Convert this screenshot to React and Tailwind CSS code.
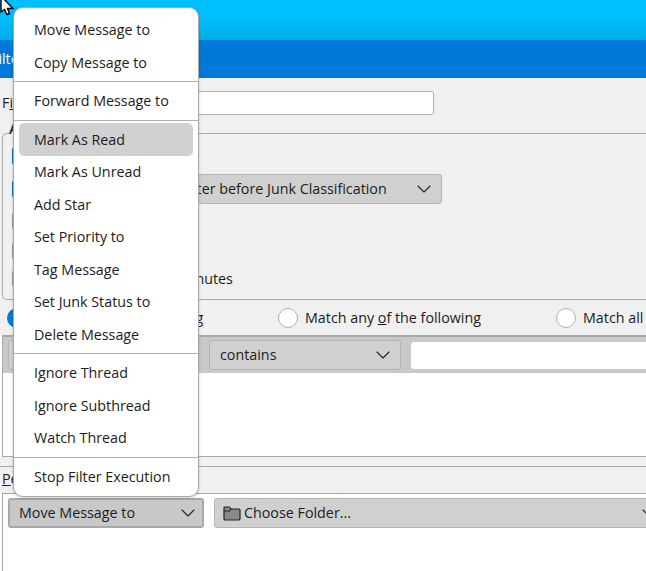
import React from "react";
import { ChevronDown } from "lucide-react";

const menuGroups = [
  ["Move Message to", "Copy Message to"],
  ["Forward Message to"],
  ["Mark As Read", "Mark As Unread", "Add Star", "Set Priority to", "Tag Message", "Set Junk Status to", "Delete Message"],
  ["Ignore Thread", "Ignore Subthread", "Watch Thread"],
  ["Stop Filter Execution"],
];

function Select({ children, className, focused }) {
  const tone = focused ? "border-2 border-[#a8a8a8] bg-[#c8c8c8] pl-[9px] pr-[2px]" : "border border-[#b4b4b4] bg-[#d0d0d0] pl-[10px] pr-[5px]";
  return (
    <div className={"flex shrink-0 items-center justify-between rounded-[3px] " + tone + " " + className}>
      <span className="whitespace-nowrap">{children}</span>
      <ChevronDown size={24} strokeWidth={1.1} className="shrink-0 text-[#222]" />
    </div>
  );
}

function Check({ on }) {
  return <div className={"h-5 w-5 shrink-0 rounded-[4px] border " + (on ? "border-[#0078d7] bg-[#0078d7]" : "border-[#a0a0a0] bg-white")}></div>;
}

function Radio({ on }) {
  return <div className={"h-5 w-5 shrink-0 rounded-full " + (on ? "border-[6px] border-[#0078d7] bg-white" : "border border-[#b0b0b0] bg-white")}></div>;
}

export default function App() {
  return (
    <div className="relative h-[571px] w-[646px] overflow-hidden bg-white font-['Open_Sans','Noto_Sans',sans-serif] text-[14.3px] text-[#1c1c1c]">
      {/* barras de titulo */}
      <div className="h-10 bg-gradient-to-b from-[#00bfff] from-40% to-[#00aee6]"></div>
      <div className="flex h-[38px] items-center overflow-hidden bg-[#0078d7] text-white">
        <span className="-ml-[9px] whitespace-nowrap">Filter Rules</span>
      </div>

      <div className="overflow-hidden bg-[#f0f0f0]">
        {/* nombre */}
        <div className="flex h-[55px] items-center pl-[2px]">
          <span className="-mt-[5px] w-[88px] shrink-0 whitespace-nowrap">F<span className="underline">i</span>lter name:</span>
          <div className="-mt-[5px] ml-[2px] h-6 w-[342px] shrink-0 rounded-[3px] border border-[#b0b0b0] bg-white"></div>
        </div>

        {/* cuando aplicar */}
        <div className="ml-[2px] h-[167px] w-[660px] rounded-l-[5px] border-y border-l border-[#a8a8a8] pl-[9px]">
          <div className="-ml-[3px] -mt-[16px] mb-[1px] h-[20px] w-fit bg-[#f0f0f0] font-semibold">Apply filter when:</div>
          <div className="flex h-[33px] items-center gap-2"><Check on /><span>Manually Run</span></div>
          <div className="flex h-[33px] w-[430px] items-center gap-2">
            <Check on />
            <span className="w-[110px] shrink-0 overflow-hidden whitespace-nowrap">Getting New Mail:</span>
            <Select className="h-[30px] w-[284px]"><span className="ml-[13px]">Filter before Junk Classification</span></Select>
          </div>
          <div className="flex h-[32px] items-center gap-2"><Check /><span>After Sending</span></div>
          <div className="flex h-[28px] items-center gap-2"><Check /><span>Archiving</span></div>
          <div className="flex h-[28px] items-center gap-[3px]"><Check /><span className="whitespace-nowrap">Periodically, every 10 minutes</span></div>
        </div>

        {/* radios */}
        <div className="flex h-[35px] items-center whitespace-nowrap pl-[7px]">
          <Radio on />
          <span className="ml-[9px] w-[242px] shrink-0">Match all of the following</span>
          <Radio />
          <span className="ml-[7px] w-[251px] shrink-0">Match any <span className="underline">o</span>f the following</span>
          <Radio />
          <span className="ml-[7px] shrink-0">Match all messages</span>
        </div>
      </div>

      {/* lista de reglas */}
      <div className="ml-[2px] h-[122px] w-[660px] border border-t-2 border-[#a8a8a8] bg-white">
        <div className="flex h-[36px] items-center bg-[#c9c9c9] pl-[5px]">
          <Select className="h-[30px] w-[191px]">Subject</Select>
          <Select className="ml-[10px] h-[30px] w-[192px]">contains</Select>
          <div className="ml-[10px] h-[27px] w-[300px] shrink-0 rounded-[3px] bg-white"></div>
        </div>
      </div>

      <div className="h-[9px] bg-[#f0f0f0]"></div>

      {/* acciones */}
      <div className="flex h-[27px] items-center border-t border-[#a8a8a8] bg-[#f0f0f0] pb-[2px] pl-[2px]">
        <span className="whitespace-nowrap"><span className="underline">P</span>erform these actions:</span>
      </div>
      <div className="ml-[2px] h-[78px] w-[660px] border-l border-t border-[#a8a8a8] bg-white pl-[5px] pt-[4px]">
        <div className="flex">
          <Select focused className="h-[30px] w-[196px]">Move Message to</Select>
          <div className="ml-[10px] flex h-[30px] w-[452px] shrink-0 items-center justify-between rounded-[3px] border border-[#b4b4b4] bg-[#d0d0d0] pl-[8px] pr-[4px]">
            <span className="flex items-center gap-[3px] whitespace-nowrap">
              <svg width="18" height="15" viewBox="0 0 18 15" className="shrink-0">
                <path d="M1 3V13a1.2 1.2 0 0 0 1.2 1H16a1.2 1.2 0 0 0 1-1V4a1.2 1.2 0 0 0-1-1H8L6.5 1H2A1 1 0 0 0 1 2z" fill="#8a8a8a" stroke="#222" strokeWidth="1.2" />
                <path d="M1 5H6.5L8 3" fill="none" stroke="#222" strokeWidth="1.2" />
              </svg>
              Choose Folder...
            </span>
            <ChevronDown size={24} strokeWidth={1.1} className="text-[#222]" />
          </div>
        </div>
      </div>

      {/* menu abierto */}
      <div className="absolute left-[13px] top-[7px] w-[186px] rounded-[10px] border border-[#a8a8a8] bg-white pb-[3.5px] pt-[5.5px] shadow-[0_1px_3px_rgba(0,0,0,0.2)]">
        {menuGroups.map((items, g) => (
          <div key={g}>
            {g > 0 && <div className="flex h-[6px] items-center"><div className="h-px w-full bg-[#b0b0b0]"></div></div>}
            {items.map((t) => (
              <div key={t} className={"mx-[5px] flex h-[32.5px] items-center rounded-[5px] pl-[15px] " + (t === "Mark As Read" ? "bg-[#d1d1d1]" : "")}>
                {t}
              </div>
            ))}
          </div>
        ))}
      </div>

      {/* puntero */}
      <svg width="16" height="18" viewBox="0 0 16 18" className="absolute left-0 top-0">
        <path d="M1 -4V12L4.5 9.5L7 14.5L9.5 13.5L7.5 8.5H13z" fill="#fff" stroke="#000" strokeWidth="1.4" />
      </svg>
    </div>
  );
}
